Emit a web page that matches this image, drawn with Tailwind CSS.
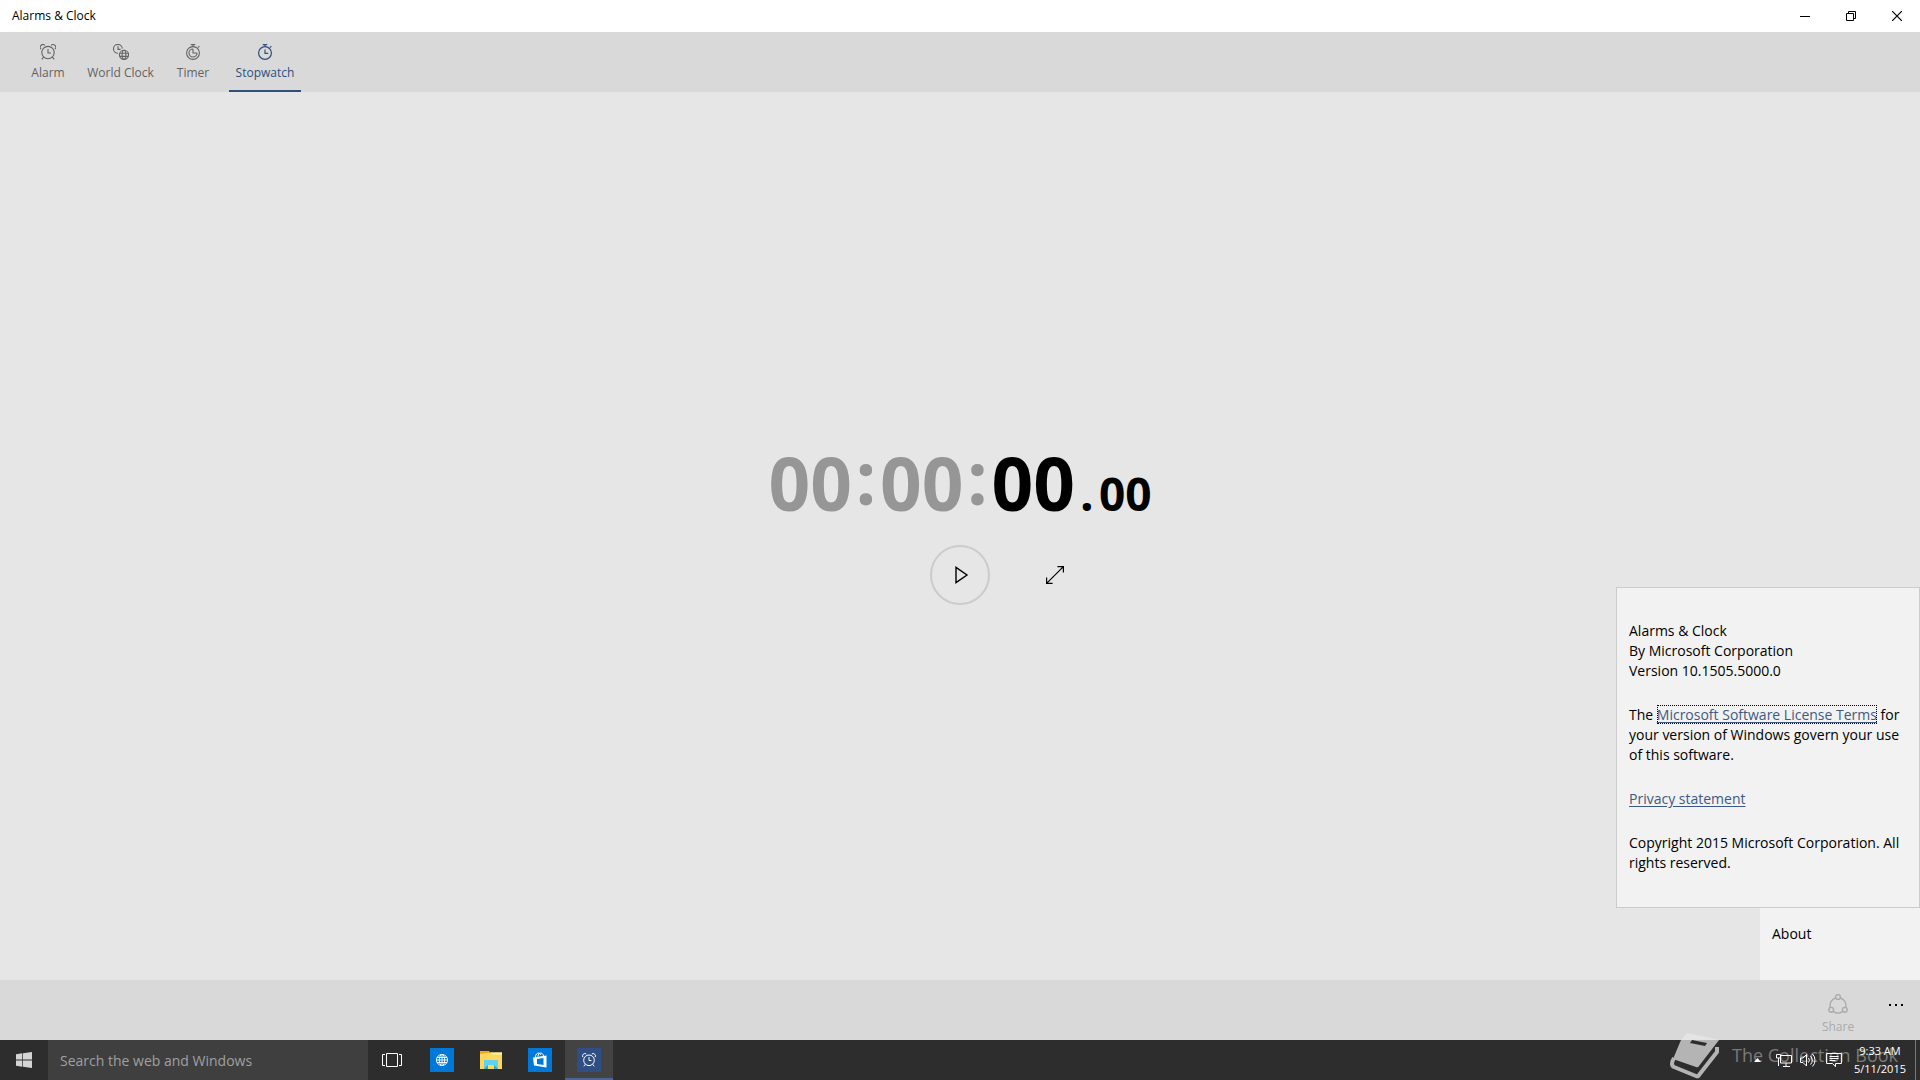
<!DOCTYPE html>
<html lang="en">
<head>
  <meta charset="UTF-8" />
  <title>Alarms &amp; Clock</title>
  <script src="https://cdn.jsdelivr.net/npm/@tailwindcss/browser@4"></script>
</head>
<body class="h-screen flex flex-col overflow-hidden bg-[#e6e6e6] text-black font-['Open_Sans','Noto_Sans',sans-serif]">
  <!-- Title bar -->
  <header class="h-8 shrink-0 bg-white flex items-center justify-between">
    <h1 class="pl-3 text-xs">Alarms &amp; Clock</h1>
    <div class="flex h-full">
      <button class="w-[46px] flex items-center justify-center" aria-label="Minimize">
        <svg class="size-[10px]" viewBox="0 0 10 10" fill="none" stroke="#000"><path d="M0 5.5h10" /></svg>
      </button>
      <button class="w-[46px] flex items-center justify-center" aria-label="Restore">
        <svg class="size-[10px]" viewBox="0 0 10 10" fill="none" stroke="#000"><path d="M.5 2.5h7v7h-7zM2.5 2.5v-2h7v7h-2" /></svg>
      </button>
      <button class="w-[46px] flex items-center justify-center" aria-label="Close">
        <svg class="size-[10px]" viewBox="0 0 10 10" fill="none" stroke="#000" stroke-width="1.2"><path d="M0 0l10 10M10 0L0 10" /></svg>
      </button>
    </div>
  </header>

  <!-- Tabs -->
  <nav class="h-[60px] shrink-0 bg-[#d9d9d9] flex pl-3 text-xs text-[#636363]">
    <button class="w-[72px] pt-3 flex flex-col items-center gap-[5px] whitespace-nowrap">
      <svg class="size-4 shrink-0" viewBox="0 0 16 16" fill="none" stroke="currentColor" stroke-width="1.1">
        <circle cx="8" cy="8.6" r="6.2" />
        <path d="M8 5v4h3M1 5.2A2.7 2.7 0 0 1 4.9 1.4M15 5.2A2.7 2.7 0 0 0 11.1 1.4M3.6 13L1.8 15.4M12.4 13l1.8 2.4" />
      </svg>
      <span>Alarm</span>
    </button>
    <button class="w-[73px] pt-3 flex flex-col items-center gap-[5px] whitespace-nowrap">
      <svg class="size-4 shrink-0" viewBox="0 0 16 16" fill="none" stroke="currentColor" stroke-width="1.1">
        <path d="M5 9.2A4.4 4.4 0 1 1 9.3 4.6M5 2.2v3.2h2.6" />
        <circle cx="11" cy="10.8" r="4.6" />
        <ellipse cx="11" cy="10.8" rx="1.9" ry="4.6" />
        <path d="M6.8 9.2h8.4M6.8 12.4h8.4" />
      </svg>
      <span>World Clock</span>
    </button>
    <button class="w-[72px] pt-3 flex flex-col items-center gap-[5px] whitespace-nowrap">
      <svg class="size-4 shrink-0" viewBox="0 0 16 16" fill="none" stroke="currentColor" stroke-width="1.1">
        <circle cx="8" cy="9" r="6.4" />
        <path d="M8 2.6V.6M5.8.6h4.4M12.8 3.6l1.6-1.5M8 5v4h3.8M12 9a4 4 0 1 1-4-4" />
      </svg>
      <span>Timer</span>
    </button>
    <button class="w-[72px] pt-3 flex flex-col items-center gap-[5px] whitespace-nowrap text-[#2f4f7d] border-b-2 border-[#2f4f7d]">
      <svg class="size-4 shrink-0" viewBox="0 0 16 16" fill="none" stroke="currentColor" stroke-width="1.2">
        <circle cx="8" cy="9" r="6.4" />
        <path d="M8 2.6V.6M5.8.6h4.4M12.8 3.6l1.6-1.5M8 5.4v4h3.2" />
      </svg>
      <span>Stopwatch</span>
    </button>
  </nav>

  <!-- Stopwatch -->
  <main class="relative flex-1 min-h-0 flex flex-col items-center justify-center pb-7">
    <div class="flex items-baseline text-[73px] font-bold leading-[88px]">
      <span class="text-[#969696]">00</span>
      <span class="w-7 self-start text-center text-[#969696] leading-[76px]">:</span>
      <span class="text-[#969696]">00</span>
      <span class="w-7 self-start text-center text-[#969696] leading-[76px]">:</span>
      <span>00</span>
      <span class="w-6 text-center text-5xl">.</span>
      <span class="text-[46px]">00</span>
    </div>
    <div class="grid grid-cols-3 w-[285px] mt-2 items-center justify-items-center">
      <button class="col-start-2 size-[60px] rounded-full border-2 border-[#cccccc] flex items-center justify-center" aria-label="Start">
        <svg class="size-5" viewBox="0 0 20 20" fill="none" stroke="#000" stroke-width="1.4"><path d="M6 2.4v15.2L17 10z" /></svg>
      </button>
      <button aria-label="Expand">
        <svg class="size-5" viewBox="0 0 20 20" fill="none" stroke="#000" stroke-width="1.2"><path d="M1.6 18.4L18.4 1.6M12.4 1.6h6v6M1.6 12.4v6h6" /></svg>
      </button>
    </div>

    <!-- About flyout over its menu -->
    <div class="absolute right-0 bottom-0 flex flex-col items-end text-sm">
      <section class="w-[304px] pt-[33px] pb-[34px] pl-3 pr-2 bg-[#f2f2f2] border border-[#cccccc] leading-5 flex flex-col gap-6">
        <p>Alarms &amp; Clock<br />By Microsoft Corporation<br />Version 10.1505.5000.0</p>
        <p>The <a href="#license" class="text-[#3d5a86] underline underline-offset-2 outline-1 outline-dotted outline-black -outline-offset-1">Microsoft Software License Terms</a> for<br />your version of Windows govern your use of this software.</p>
        <p><a href="#privacy" class="text-[#3d5a86] underline underline-offset-2">Privacy statement</a></p>
        <p>Copyright 2015 Microsoft Corporation. All rights reserved.</p>
      </section>
      <div class="w-40 h-[72px] bg-[#f2f2f2]">
        <button class="w-full pl-3 pt-4 text-left">About</button>
      </div>
    </div>
  </main>

  <!-- App bar -->
  <footer class="h-[60px] shrink-0 bg-[#d9d9d9] flex justify-end">
    <button class="w-[68px] pt-[14px] flex flex-col items-center gap-[5px] text-xs text-[#ababab]" disabled>
      <svg class="size-5 shrink-0" viewBox="0 0 20 20" fill="none" stroke="currentColor" stroke-width="1.4">
        <circle cx="10" cy="3" r="2.4" /><circle cx="3.2" cy="15.8" r="2.4" /><circle cx="16.8" cy="15.8" r="2.4" />
        <path d="M7.6 4A8 8 0 0 0 2.2 13.4M12.4 4a8 8 0 0 1 5.4 9.4M5.4 17.6a8.4 8.4 0 0 0 9.2 0" />
      </svg>
      <span>Share</span>
    </button>
    <button class="w-12 pt-6 flex justify-center items-start" aria-label="More">
      <svg class="w-4 h-[2px]" viewBox="0 0 16 2" fill="#000"><path d="M1 0h2v2H1zM7 0h2v2H7zM13 0h2v2h-2z" /></svg>
    </button>
  </footer>

  <!-- Taskbar -->
  <div class="relative h-10 shrink-0 bg-[#2d2d2d] flex text-white">
    <button class="w-12 flex items-center justify-center" aria-label="Start menu">
      <svg class="size-4" viewBox="0 0 16 16" fill="#d4d4d4"><path d="M0 2.2L6.3 1.3V7.6H0zM7 1.2L16 0v7.6H7zM0 8.4h6.3v6.3L0 13.8zM7 8.4h9V16l-9-1.2z" /></svg>
    </button>
    <input type="search" aria-label="Search the web and Windows" placeholder="Search the web and Windows" class="w-80 px-3 pt-[2px] bg-[#3f3f3f] text-sm text-white placeholder:text-[#a0a0a0] outline-none" />
    <button class="w-12 flex items-center justify-center" aria-label="Task view">
      <svg class="w-5 h-[14px]" viewBox="0 0 20 14" fill="none" stroke="#fff"><path d="M4.5.5h11v13h-11zM3 1.5H.5v11H3M17 1.5h2.5v11H17" /></svg>
    </button>
    <div class="flex gap-px ml-[2px]">
      <button class="w-12 flex items-center justify-center" aria-label="Browser">
        <svg class="size-6" viewBox="0 0 24 24" fill="none" stroke="#fff" stroke-width=".9"><path fill="#0078d7" stroke="none" d="M0 0h24v24H0z" /><circle cx="12" cy="12" r="5.6" /><ellipse cx="12" cy="12" rx="2.7" ry="5.6" /><path d="M7 9.5h10M7 14.5h10M6.400 12h11.200M12 6.400v11.200" /></svg>
      </button>
      <button class="w-12 flex items-center justify-center" aria-label="File Explorer">
        <svg class="size-6" viewBox="0 0 24 24"><path fill="#f2a818" d="M1 3h9l1 1.5h2V7H1z" /><path fill="#ffd75e" d="M1 6l11-1.5h11V21H1z" /><path fill="#fff0a8" d="M12 4.5h11v2H12z" /><path fill="#5fd3ee" d="M5 12h14v9h-4v-4H9v4H5z" /><path fill="#35a5cb" d="M5 21l4-4v4zM15 17l4 4h-4z" /></svg>
      </button>
      <button class="w-12 flex items-center justify-center" aria-label="Store">
        <svg class="size-6" viewBox="0 0 24 24"><path fill="#0078d7" d="M0 0h24v24H0z" /><path fill="none" stroke="#fff" d="M7.500 9c0-4.500 4.500-5 5.500-2M10 8.500c0-4.500 5-4.500 5.500-.5" /><path fill="#fff" d="M5 9.500l13.500-2v12L6 17.500z" /><path fill="#0078d7" d="M9 11l6.500-1v7L9 16z" /></svg>
      </button>
      <button class="w-12 flex items-center justify-center bg-[#434343] border-b-2 border-[#4a6596]" aria-label="Alarms &amp; Clock">
        <svg class="size-6 mt-[2px]" viewBox="0 0 24 24" fill="none" stroke="#fff"><path fill="#2f4f84" stroke="none" d="M0 0h24v24H0z" /><circle cx="12" cy="12.300" r="5.300" /><path d="M12 9v3.500h2.500M5.900 9.200A2.400 2.400 0 0 1 9.200 5.900M18.100 9.200A2.400 2.400 0 0 0 14.800 5.900M8.300 16.300l-1.500 2M15.700 16.300l1.500 2" /></svg>
      </button>
    </div>

    <!-- Watermark -->
    <div class="absolute right-[22px] bottom-0 flex items-center gap-3 text-[#7a7a7a] pointer-events-none">
      <svg class="w-[50px] h-12" viewBox="0 0 50 48" fill="none">
        <path fill="#e4e4e4" d="M17 1L50 8H11Z" />
        <path fill="#b4b4b4" d="M11 8H49L29 34Q28 36 26 35L3 27Z" />
        <path stroke="#b4b4b4" stroke-width="4" stroke-linejoin="round" d="M4 26Q0 33 4 35L26 44Q28 45 29 43L47 20V15" />
        <path fill="#2d2d2d" d="M22 8L37 11 35 14 20 11Z" />
      </svg>
      <span class="pb-[3px] text-lg">The Collection Book</span>
    </div>

    <!-- Tray -->
    <div class="relative ml-auto flex items-center">
      <button class="w-4 mr-[10px] flex justify-center" aria-label="Show hidden icons">
        <svg class="w-[7px] h-1" viewBox="0 0 7 4" fill="#fff"><path d="M3.500 0L7 4H0z" /></svg>
      </button>
      <button class="mr-2" aria-label="Network">
        <svg class="size-4" viewBox="0 0 16 16" fill="none" stroke="#fff"><path d="M5 3.500h10.500v7.500H4.500V6M7 14.500h7M10 11v3.500M.5 2.500h4v3.500h-4zM2.500 6v8" /></svg>
      </button>
      <button class="mr-[10px]" aria-label="Volume">
        <svg class="size-4" viewBox="0 0 16 16" fill="none" stroke="#fff"><path d="M.5 6v4.500h2.500L6.500 14V2.500L3 6zM8.500 6a3.500 3.500 0 0 1 0 4.500M10.500 4a6 6 0 0 1 0 8.500M12.500 2a9 9 0 0 1 0 12.500" /></svg>
      </button>
      <button class="mr-3" aria-label="Notifications">
        <svg class="size-4" viewBox="0 0 16 16" fill="none" stroke="#fff"><path d="M.6 1.500h14.800v10H9.500v3.200l-3-3.200H.6zM3.500 4.500h9M3.500 6.500h9M3.500 8.500h6" /></svg>
      </button>
      <button class="mr-[9px] text-center text-[11px] leading-[18px]">9:33 AM<br />5/11/2015</button>
      <span class="w-[5px] self-stretch border-l border-[#777777]"></span>
    </div>
  </div>
</body>
</html>
